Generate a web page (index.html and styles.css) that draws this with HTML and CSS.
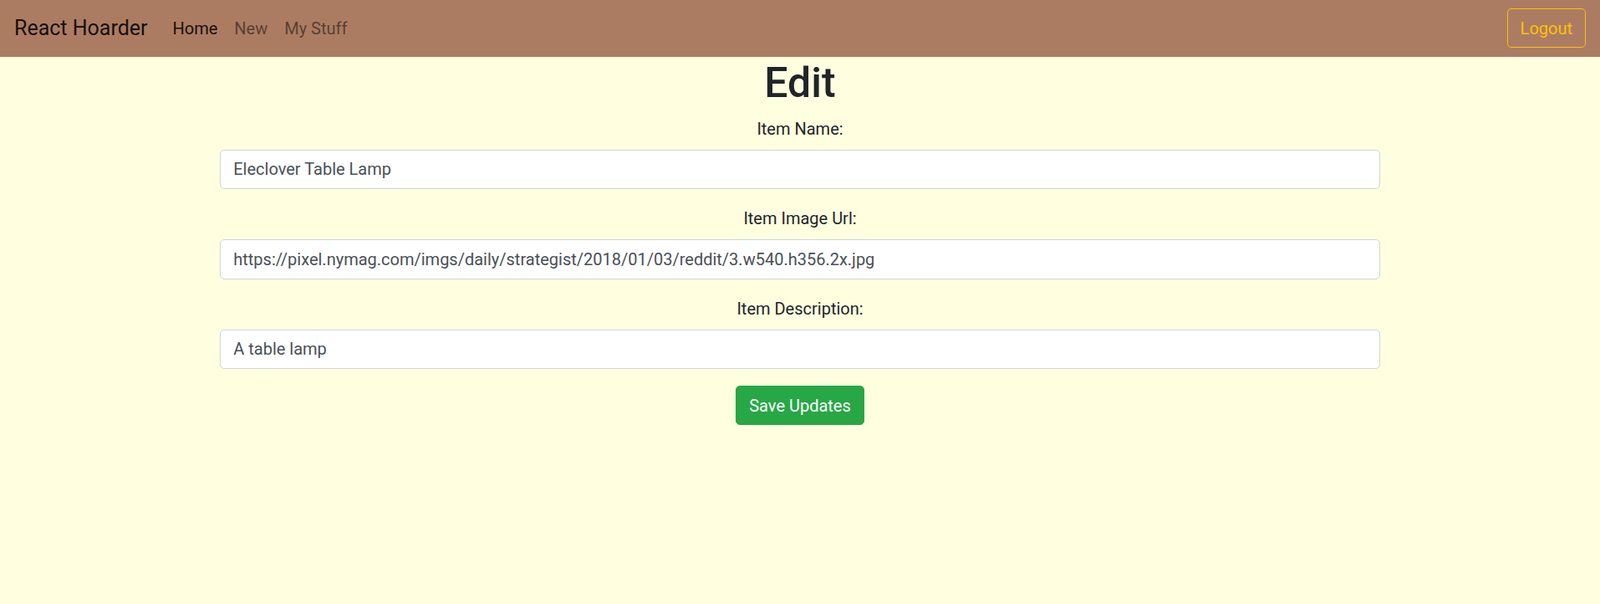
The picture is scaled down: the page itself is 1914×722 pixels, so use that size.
FILE: index.html
```html
<!DOCTYPE html>
<html lang="en">
<head>
<meta charset="utf-8">
<title>React Hoarder</title>
<link rel="stylesheet" href="styles.css">
</head>
<body>
<nav class="navbar">
  <div class="nav-left">
    <a class="brand" href="#">React Hoarder</a>
    <div class="nav-links">
      <a class="nav-link active" href="#">Home</a>
      <a class="nav-link" href="#">New</a>
      <a class="nav-link" href="#">My Stuff</a>
    </div>
  </div>
  <button class="btn-logout" type="button">Logout</button>
</nav>
<main class="container">
  <h1 class="title">Edit</h1>
  <form class="edit-form">
    <div class="form-group">
      <label class="form-label" for="name">Item Name:</label>
      <input class="form-control" id="name" type="text" value="Eleclover Table Lamp">
    </div>
    <div class="form-group">
      <label class="form-label" for="img">Item Image Url:</label>
      <input class="form-control" id="img" type="text" value="https://pixel.nymag.com/imgs/daily/strategist/2018/01/03/reddit/3.w540.h356.2x.jpg">
    </div>
    <div class="form-group">
      <label class="form-label" for="desc">Item Description:</label>
      <input class="form-control" id="desc" type="text" value="A table lamp">
    </div>
    <button class="btn-save" type="button">Save Updates</button>
  </form>
</main>
</body>
</html>
```
FILE: styles.css
```css
* { box-sizing: border-box; }
html, body { margin: 0; padding: 0; }
body {
  font-family: Roboto, "Open Sans", sans-serif;
  font-size: 20px;
  line-height: 1.5;
  color: #212529;
  background: #ffffe0;
  min-height: 722px;
}
.navbar {
  display: flex;
  align-items: center;
  justify-content: space-between;
  height: 67.5px;
  padding: 0 17px;
  background: #ac7c62;
}
.nav-left { display: flex; align-items: center; }
.brand {
  font-size: 25px;
  line-height: 37px;
  padding: 4px 0;
  margin-right: 20px;
  color: rgba(0, 0, 0, 0.9);
  text-decoration: none;
}
.nav-links { display: flex; }
.nav-link {
  padding: 8px 10px;
  line-height: 30px;
  color: rgba(0, 0, 0, 0.5);
  text-decoration: none;
}
.nav-link.active { color: rgba(0, 0, 0, 0.9); }
.btn-logout {
  font-family: inherit;
  font-size: 20px;
  line-height: 30px;
  padding: 7.5px 15px;
  border: 1px solid #ffc107;
  border-radius: 5px;
  background: transparent;
  color: #ffc107;
}
.container {
  width: 1387.5px;
  margin: 0 auto;
  padding-top: 1px;
  text-align: center;
}
.title {
  font-size: 50px;
  font-weight: 500;
  line-height: 60px;
  margin: 0 0 10px;
}
.form-group { margin-bottom: 20px; }
.form-label {
  display: block;
  margin-bottom: 10px;
}
.form-control {
  display: block;
  width: 100%;
  height: 47.5px;
  padding: 7.5px 15px;
  font-family: inherit;
  font-size: 20px;
  line-height: 30px;
  color: #495057;
  background: #fff;
  border: 1px solid #ced4da;
  border-radius: 5px;
}
.btn-save {
  font-family: inherit;
  font-size: 20px;
  line-height: 30px;
  padding: 7.5px 15px;
  color: #fff;
  background: #28a745;
  border: 1px solid #28a745;
  border-radius: 5px;
}
```
